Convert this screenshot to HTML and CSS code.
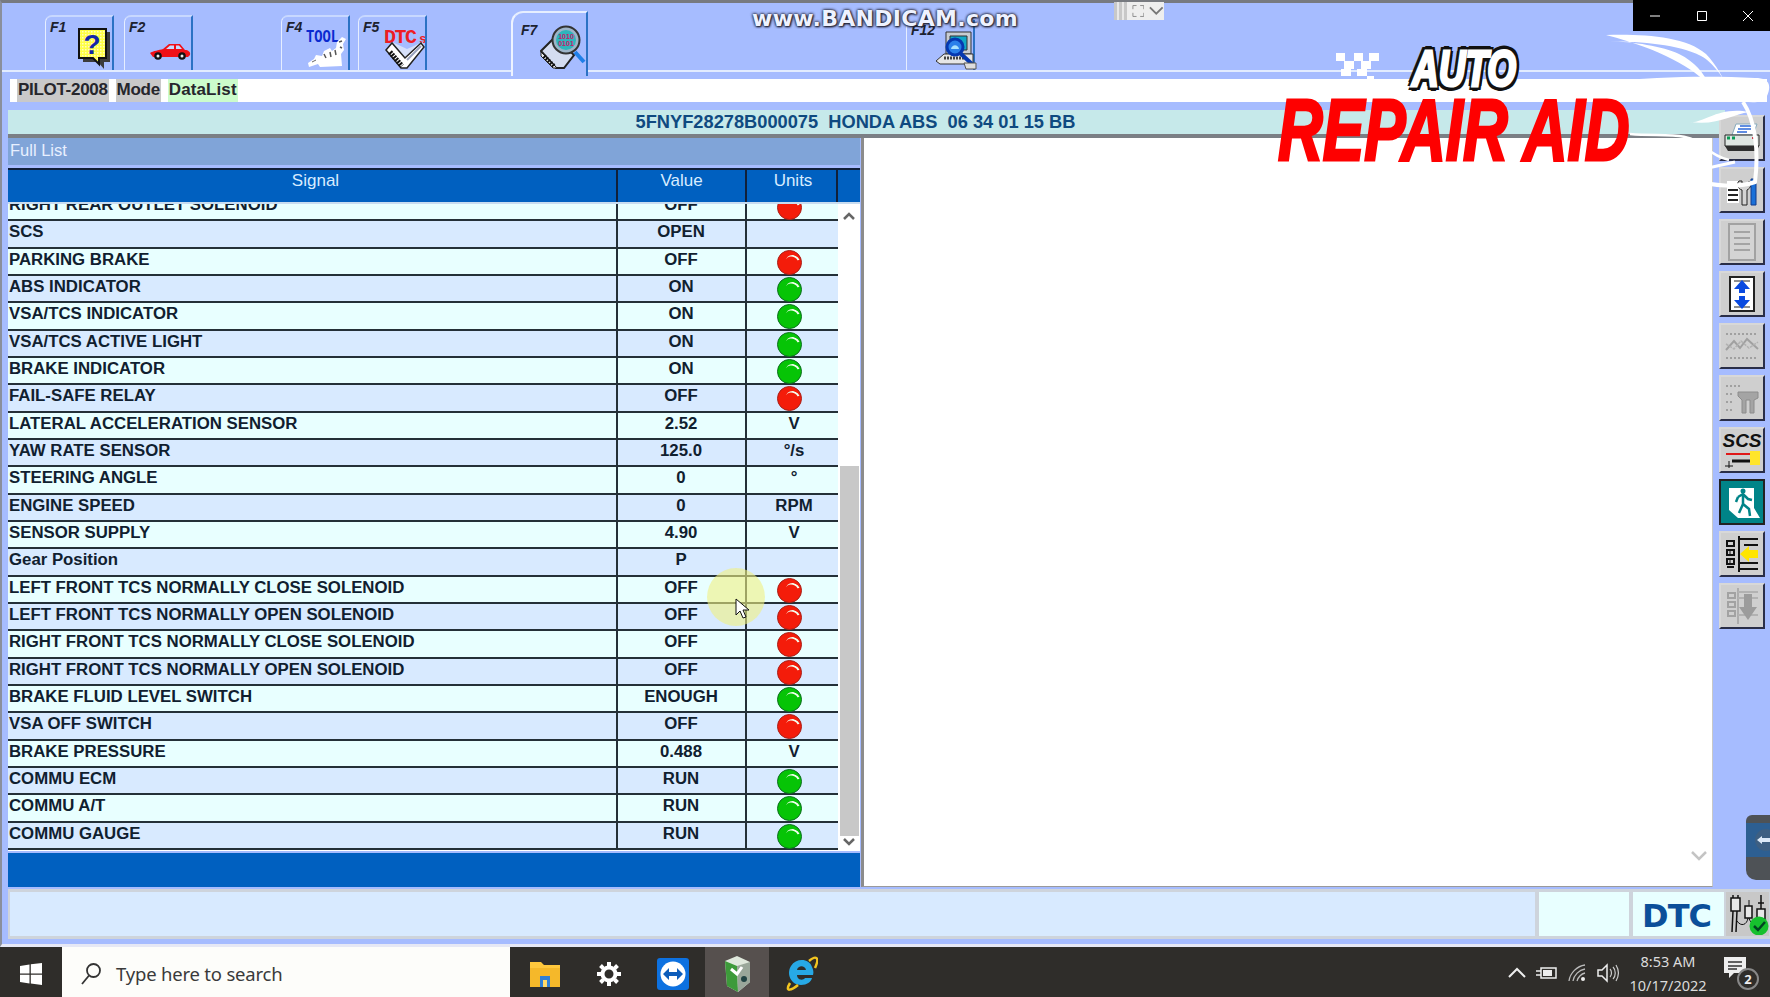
FILE: index.html
```html
<!DOCTYPE html>
<html lang="en">
<head>
<meta charset="utf-8">
<title>PILOT-2008 DataList</title>
<link rel="stylesheet" href="styles.css">
</head>
<body>
<div class="screen">
  <div class="window">
    <div class="toolbar">
      <div class="tab"><span class="fkey">F1</span>
        <svg class="tab-icon" width="36" height="42" viewBox="0 0 36 42"><defs><pattern id="dots" width="3" height="3" patternUnits="userSpaceOnUse"><rect width="3" height="3" fill="#ffff44"/><rect width="1.500" height="1.500" fill="#fffcc0"/></pattern></defs><path d="M7 4H34V34H28V41L22 34H7Z" fill="#3c3c3c"/><path d="M3 1H30V30H23V36L17 30H3Z" fill="url(#dots)" stroke="#111" stroke-width="2"/><text x="16" y="26" class="svg-q">?</text></svg>
      </div>
      <div class="tab"><span class="fkey">F2</span>
        <svg class="tab-icon car" width="41" height="16" viewBox="0 0 41 16"><path d="M0 9C3 7 9 6 13 5L19 0H30L35 6C38 6 41 8 40 11L38 13H3Z" fill="#f01018"/><path d="M16 5L20 1.500H24V5ZM26 1.500H29L32 5H26Z" fill="#c8dcff"/><circle cx="8" cy="12" r="3.800" fill="#111"/><circle cx="8" cy="12" r="1.500" fill="#eee"/><circle cx="32" cy="12" r="3.800" fill="#111"/><circle cx="32" cy="12" r="1.500" fill="#eee"/></svg>
      </div>
      <div class="tab-slot"></div>
      <div class="tab tight"><span class="fkey">F4</span>
        <svg class="tab-icon" width="42" height="42" viewBox="0 0 42 42"><text x="0" y="14" textLength="33" lengthAdjust="spacingAndGlyphs" class="svg-tool">TOOL</text><path d="M30 20L31 14L36 9L40 11L37 16L38 22L35 26L36 38L14 39L12 36L3 39L2 35L8 31L10 27L16 28L18 23L24 20L26 23Z" fill="#fff"/><path d="M18 26L20 30M24 24L25 29M29 22L30 27M33 14L36 13M34 19L36 20" stroke="#555" stroke-width="1.500"/><path d="M6 34L10 32" stroke="#666"/></svg>
      </div>
      <div class="tab"><span class="fkey">F5</span>
        <svg class="tab-icon" width="42" height="42" viewBox="0 0 42 42"><text x="1" y="15" textLength="33" lengthAdjust="spacing" class="svg-dtc">DTC</text><text x="36" y="15" class="svg-dtc small">s</text><path d="M3 21L9 14L24 21L40 14L41 20L24 40L18 40Z" fill="#d6e0fa"/><path d="M3 22L9 15L22 30L38 15L41 19L24 40H18Z" fill="#fff" stroke="#222" stroke-width="1.500"/><path d="M7 24L19 38" stroke="#111" stroke-width="5" stroke-dasharray="2 1"/><path d="M24 32L38 18" stroke="#9aa3c0" stroke-width="2"/></svg>
      </div>
      <div class="tab-slot narrow"></div>
      <div class="tab active"><span class="fkey">F7</span>
        <svg class="tab-icon" width="46" height="44" viewBox="0 0 46 44"><path d="M1 26L15 12L34 30L24 43H16Z" fill="#d4dcf0" stroke="#222" stroke-width="2"/><path d="M1 27L17 43L13 43L1 31Z" fill="#eee" stroke="#222"/><path d="M4 31L14 41" stroke="#111" stroke-width="4" stroke-dasharray="2 1"/><circle cx="26" cy="15" r="13.500" fill="#9db4c8" stroke="#333" stroke-width="2"/><circle cx="26" cy="15" r="10" fill="#2fb4bc"/><text x="26" y="13.500" class="svg-bits">1010</text><text x="26" y="21" class="svg-bits">0101</text><path d="M35 27L44 37" stroke="#1f7fe8" stroke-width="4"/></svg>
      </div>
      <div class="tab-slot wide"></div>
      <div class="tab plain"><span class="fkey">F12</span>
        <svg class="tab-icon" width="42" height="40" viewBox="0 0 42 40"><path d="M11 2H36V24H11Z" fill="#c8ccd2" stroke="#333"/><path d="M15 6H32V20H15Z" fill="#12a8c8" stroke="#333"/><path d="M1 31L9 24H38L38 34H5Z" fill="#e6e6e6" stroke="#333"/><path d="M9 28H29" stroke="#444" stroke-width="3" stroke-dasharray="2 1"/><circle cx="20" cy="17" r="8" fill="#2a80ea" stroke="#0638b0" stroke-width="3"/><path d="M16 19C17 14 23 14 24 19" fill="#a8e2ff"/><path d="M25 23L37 34" stroke="#0638b0" stroke-width="4"/><path d="M29 33H41V39H31Z" fill="#ddd" stroke="#555"/></svg>
      </div>
    </div>
    <div class="crumbs">
      <span class="crumb">PILOT-2008</span>
      <span class="crumb">Mode</span>
      <span class="crumb green">DataList</span>
    </div>
    <div class="main">
      <div class="content">
        <div class="vin-bar">5FNYF28278B000075&nbsp; HONDA ABS&nbsp; 06 34 01 15 BB</div>
        <div class="panes">
          <section class="list-pane">
            <div class="list-title">Full List</div>
            <div class="list-head">
              <span class="head-cell">Signal</span>
              <span class="head-cell">Value</span>
              <span class="head-cell">Units</span>
              <span class="head-cell"></span>
            </div>
            <div class="list-body">
              <div class="rows">
                <div class="row"><span class="c-signal">RIGHT REAR OUTLET SOLENOID</span><span class="c-value">OFF</span><span class="c-unit"><i class="light red"></i></span></div>
                <div class="row"><span class="c-signal">SCS</span><span class="c-value">OPEN</span><span class="c-unit"></span></div>
                <div class="row"><span class="c-signal">PARKING BRAKE</span><span class="c-value">OFF</span><span class="c-unit"><i class="light red"></i></span></div>
                <div class="row"><span class="c-signal">ABS INDICATOR</span><span class="c-value">ON</span><span class="c-unit"><i class="light green"></i></span></div>
                <div class="row"><span class="c-signal">VSA/TCS INDICATOR</span><span class="c-value">ON</span><span class="c-unit"><i class="light green"></i></span></div>
                <div class="row"><span class="c-signal">VSA/TCS ACTIVE LIGHT</span><span class="c-value">ON</span><span class="c-unit"><i class="light green"></i></span></div>
                <div class="row"><span class="c-signal">BRAKE INDICATOR</span><span class="c-value">ON</span><span class="c-unit"><i class="light green"></i></span></div>
                <div class="row"><span class="c-signal">FAIL-SAFE RELAY</span><span class="c-value">OFF</span><span class="c-unit"><i class="light red"></i></span></div>
                <div class="row"><span class="c-signal">LATERAL ACCELERATION SENSOR</span><span class="c-value">2.52</span><span class="c-unit">V</span></div>
                <div class="row"><span class="c-signal">YAW RATE SENSOR</span><span class="c-value">125.0</span><span class="c-unit">°/s</span></div>
                <div class="row"><span class="c-signal">STEERING ANGLE</span><span class="c-value">0</span><span class="c-unit">°</span></div>
                <div class="row"><span class="c-signal">ENGINE SPEED</span><span class="c-value">0</span><span class="c-unit">RPM</span></div>
                <div class="row"><span class="c-signal">SENSOR SUPPLY</span><span class="c-value">4.90</span><span class="c-unit">V</span></div>
                <div class="row"><span class="c-signal">Gear Position</span><span class="c-value">P</span><span class="c-unit"></span></div>
                <div class="row"><span class="c-signal">LEFT FRONT TCS NORMALLY CLOSE SOLENOID</span><span class="c-value">OFF</span><span class="c-unit"><i class="light red"></i></span></div>
                <div class="row"><span class="c-signal">LEFT FRONT TCS NORMALLY OPEN SOLENOID</span><span class="c-value">OFF</span><span class="c-unit"><i class="light red"></i></span></div>
                <div class="row"><span class="c-signal">RIGHT FRONT TCS NORMALLY CLOSE SOLENOID</span><span class="c-value">OFF</span><span class="c-unit"><i class="light red"></i></span></div>
                <div class="row"><span class="c-signal">RIGHT FRONT TCS NORMALLY OPEN SOLENOID</span><span class="c-value">OFF</span><span class="c-unit"><i class="light red"></i></span></div>
                <div class="row"><span class="c-signal">BRAKE FLUID LEVEL SWITCH</span><span class="c-value">ENOUGH</span><span class="c-unit"><i class="light green"></i></span></div>
                <div class="row"><span class="c-signal">VSA OFF SWITCH</span><span class="c-value">OFF</span><span class="c-unit"><i class="light red"></i></span></div>
                <div class="row"><span class="c-signal">BRAKE PRESSURE</span><span class="c-value">0.488</span><span class="c-unit">V</span></div>
                <div class="row"><span class="c-signal">COMMU ECM</span><span class="c-value">RUN</span><span class="c-unit"><i class="light green"></i></span></div>
                <div class="row"><span class="c-signal">COMMU A/T</span><span class="c-value">RUN</span><span class="c-unit"><i class="light green"></i></span></div>
                <div class="row"><span class="c-signal">COMMU GAUGE</span><span class="c-value">RUN</span><span class="c-unit"><i class="light green"></i></span></div>
              </div>
              <div class="scrollbar">
                <svg class="arrow" width="12" height="8" viewBox="0 0 12 8"><path d="M1 7L6 2L11 7" fill="none" stroke="#666" stroke-width="2.500"/></svg>
                <div class="track"><div class="thumb"></div></div>
                <svg class="arrow" width="12" height="8" viewBox="0 0 12 8"><path d="M1 1L6 6L11 1" fill="none" stroke="#666" stroke-width="2.500"/></svg>
              </div>
            </div>
            <div class="list-foot"></div>
          </section>
          <section class="detail-pane">
            <svg class="detail-chevron" width="16" height="10" viewBox="0 0 16 10"><path d="M1 1L8 8L15 1" fill="none" stroke="#c4c4c4" stroke-width="2.500"/></svg>
          </section>
        </div>
      </div>
      <aside class="side-tools">
        <button class="tool"><svg width="36" height="30" viewBox="0 0 36 30"><path d="M12 1H33L29 12H8Z" fill="#fff" stroke="#8ab"/><path d="M16 3H29M14 6H27M13 9H23" stroke="#2b68d8" stroke-width="1.500"/><path d="M1 12H35V23H1Z" fill="#dfe6e2" stroke="#222"/><path d="M3 15H6M8 15H11" stroke="#0a9a55" stroke-width="3"/><path d="M28 15H32" stroke="#d04050" stroke-width="2"/><path d="M1 23L4 28H33L35 23Z" fill="#2e2e2e"/></svg></button>
        <button class="tool"><svg width="30" height="34" viewBox="0 0 30 34"><path d="M0 8H12V30H0Z" fill="#fff"/><path d="M1 12H11M1 17H11M1 22H11M1 27H11" stroke="#222" stroke-width="2"/><path d="M12 8C9 11 11 16 15 17V32H20V17C24 15 25 11 22 8V12H15V8Z" fill="#d4d4d4" stroke="#222"/><path d="M24 6H29V32H24Z" fill="#1a70d8" stroke="#123a8a"/></svg></button>
        <button class="tool off"><svg width="30" height="38" viewBox="0 0 30 38"><path d="M2 1H28V37H2Z" fill="#d4d4d4" stroke="#a2a2a2" stroke-width="2"/><path d="M7 9H23M7 15H23M7 21H23M7 27H23" stroke="#a4a4a4" stroke-width="2"/></svg></button>
        <button class="tool"><svg width="26" height="36" viewBox="0 0 26 36"><path d="M1 1H25V35H1Z" fill="#fff" stroke="#222" stroke-width="2"/><path d="M5 5H21M5 31H21" stroke="#222"/><path d="M13 4L21 13H16V17H10V13H5ZM13 33L21 24H16V20H10V24H5Z" fill="#0a4ae0"/></svg></button>
        <button class="tool off"><svg width="36" height="34" viewBox="0 0 36 34"><path d="M2 5H34M2 29H34" stroke="#a0a0a0" stroke-width="2" stroke-dasharray="2 2"/><path d="M2 21L10 12L16 19L23 10L34 20" fill="none" stroke="#a0a0a0" stroke-width="2"/><path d="M2 15L10 20L17 12L25 19L34 13" fill="none" stroke="#b2b2b2" stroke-width="1.500" stroke-dasharray="3 1"/></svg></button>
        <button class="tool off"><svg width="36" height="36" viewBox="0 0 36 36"><path d="M2 6H16M2 14H10M2 22H10M2 30H10" stroke="#a0a0a0" stroke-width="2" stroke-dasharray="2 2"/><path d="M14 12H34V18L30 20V33H26V20L22 20V33H18V20L14 16Z" fill="#a4a4a4" stroke="#8c8c8c"/></svg></button>
        <button class="tool"><svg width="42" height="40" viewBox="0 0 42 40"><text x="21" y="17" class="svg-scs">SCS</text><path d="M5 24H29" stroke="#e01818" stroke-width="2"/><path d="M11 31H29" stroke="#111" stroke-width="3"/><path d="M8 31V38M4 36H12" stroke="#111"/><path d="M29 21H39V35H29Z" fill="#ffe52a"/></svg></button>
        <button class="tool exit"><svg width="36" height="36" viewBox="0 0 36 36"><path d="M5 4H30V24L36 34H14L5 26Z" fill="#fff"/><circle cx="19" cy="7" r="2.500" fill="#008488"/><path d="M14 13L19 10L24 15L28 16M19 11L19 20L15 29M19 20L25 25L26 32M14 13L12 18" fill="none" stroke="#008488" stroke-width="2.500"/></svg></button>
        <button class="tool"><svg width="36" height="36" viewBox="0 0 36 36"><path d="M3 5H10V10H3ZM3 14H10V19H3ZM3 23H10V28H3ZM3 31H10" fill="none" stroke="#111" stroke-width="2"/><path d="M6 14V19M6 24V27" stroke="#111"/><path d="M15 0V36" stroke="#111" stroke-width="2"/><path d="M15 3H34M20 9H34M27 15H34M27 21H34M15 27H34M15 33H34" stroke="#111" stroke-width="2"/><path d="M16 18L25 10V14H34V22H25V26Z" fill="#ffe500"/></svg></button>
        <button class="tool off"><svg width="34" height="36" viewBox="0 0 34 36"><path d="M3 5H10V10H3ZM3 14H10V19H3ZM3 23H10V28H3Z" fill="none" stroke="#a2a2a2" stroke-width="2"/><path d="M13 0V36" stroke="#a2a2a2" stroke-width="1.500"/><path d="M13 4H33M13 10H33M13 27H33" stroke="#b2b2b2" stroke-width="2"/><path d="M19 6H27V19H32L23 32L14 19H19Z" fill="#9c9c9c"/></svg></button>
      </aside>
    </div>
    <div class="status">
      <div class="st-cell grow"></div>
      <div class="st-cell mid"></div>
      <div class="st-cell code">DTC</div>
      <div class="st-link">
        <svg width="42" height="42" viewBox="0 0 42 42"><path d="M4 5H13V18H4ZM6 2V5M11 2V5" fill="#e8e8e8" stroke="#111" stroke-width="1.500"/><path d="M6 18L5 39M10 18L9 39" stroke="#111" stroke-width="1.500"/><path d="M10 28C14 34 20 32 21 25" fill="none" stroke="#111"/><path d="M18 13H25V25H18Z" fill="#e8e8e8" stroke="#111" stroke-width="1.500"/><path d="M22 25C24 32 28 32 32 28M22 7V13" fill="none" stroke="#111"/><path d="M30 16H38V26H30Z" fill="#e8e8e8" stroke="#111" stroke-width="1.500"/><path d="M34 2V16M31 10H37" stroke="#111" stroke-width="1.500"/><circle cx="32" cy="33" r="9.500" fill="#16c02e"/><path d="M27 33L31 37L38 29" fill="none" stroke="#042" stroke-width="2.500"/></svg>
      </div>
    </div>
  </div>
  <footer class="taskbar">
    <div class="start"><svg width="22" height="22" viewBox="0 0 22 22"><path d="M0 3L9.500 1.500V10.500H0ZM10.800 1.300L22 0V10.500H10.800ZM0 11.800H9.500V20.500L0 19ZM10.800 11.800H22V22L10.800 20.600Z" fill="#fff"/></svg></div>
    <div class="search">
      <svg width="22" height="24" viewBox="0 0 22 24"><circle cx="13.500" cy="8.500" r="6.500" fill="none" stroke="#333" stroke-width="1.800"/><path d="M9 13.500L2 22" stroke="#333" stroke-width="1.800"/></svg>
      <span>Type here to search</span>
    </div>
    <div class="apps">
      <div class="app"><svg width="32" height="28" viewBox="0 0 32 28"><path d="M1 2H12L15 5H31V27H1Z" fill="#ffc83d"/><path d="M1 8H31V27H1Z" fill="#f5b82a"/><path d="M11 16H21V27H11Z" fill="#2f7fd6"/><path d="M14 20H18V27H14Z" fill="#ffd968"/></svg></div>
      <div class="app"><svg width="26" height="26" viewBox="0 0 26 26"><circle cx="13" cy="13" r="6.500" fill="none" stroke="#fff" stroke-width="4"/><path d="M13 1V5M13 21V25M1 13H5M21 13H25M4.500 4.500L7.300 7.300M18.700 18.700L21.500 21.500M21.500 4.500L18.700 7.300M7.300 18.700L4.500 21.500" stroke="#fff" stroke-width="4"/></svg></div>
      <div class="app"><svg width="32" height="32" viewBox="0 0 32 32"><rect width="32" height="32" rx="3" fill="#0d71e0"/><circle cx="16" cy="16" r="12.500" fill="#fff"/><path d="M6 16L12 10V14H20V10L26 16L20 22V18H12V22Z" fill="#0d5dbb"/></svg></div>
      <div class="app current"><svg width="32" height="38" viewBox="0 0 32 38"><path d="M4 6L16 1L29 7V27L17 37L6 31Z" fill="#dfe8dc"/><path d="M4 6L16 11L17 37L6 31Z" fill="#3d9a3a"/><path d="M16 11L29 7V27L17 37Z" fill="#9aa79a"/><path d="M10 14L16 19L21 12" fill="none" stroke="#fff" stroke-width="3"/><circle cx="23" cy="24" r="3" fill="#244"/></svg></div>
      <div class="app"><svg width="34" height="36" viewBox="0 0 34 36"><path d="M28 11C25 2 12 2 7 10C2 18 7 29 17 29C23 29 27 26 28 22H21C19 25 13 24 13 19H29C30 16 29 13 28 11ZM13 14C14 9 21 9 22 14Z" fill="#27a9e6"/><path d="M6 27C0 37 8 34 14 29M25 5C32 -1 36 1 31 12" fill="none" stroke="#f3c520" stroke-width="2.500"/></svg></div>
    </div>
    <div class="tray">
      <svg width="18" height="12" viewBox="0 0 18 12"><path d="M1 10L9 2L17 10" fill="none" stroke="#eee" stroke-width="2"/></svg>
      <svg width="22" height="14" viewBox="0 0 22 14"><path d="M6 2H21V12H6ZM1 5H6M1 9H6" fill="none" stroke="#eee" stroke-width="1.500"/><path d="M8 4H17V10H8Z" fill="#eee"/></svg>
      <svg class="wifi" width="20" height="18" viewBox="0 0 20 18"><path d="M1 17C2 9 9 2 17 1M5 17C6 11 11 6 17 5M9 17C10 14 13 10 17 9" fill="none" stroke="#bbb" stroke-width="1.300"/><circle cx="15" cy="15" r="2" fill="#eee"/></svg>
      <svg width="22" height="20" viewBox="0 0 22 20"><path d="M1 7H5L10 2V18L5 13H1Z" fill="none" stroke="#eee" stroke-width="1.500"/><path d="M13 6C15 8 15 12 13 14M16 4C19 7 19 13 16 16M19 2C22 7 22 13 19 18" fill="none" stroke="#ccc" stroke-width="1.200"/></svg>
      <div class="clock"><span>8:53 AM</span><span>10/17/2022</span></div>
      <div class="notify">
        <svg width="24" height="24" viewBox="0 0 24 24"><path d="M1 1H23V17H11L6 22V17H1Z" fill="#eee"/><path d="M5 6H19M5 10H19M5 13H14" stroke="#333" stroke-width="1.300"/></svg>
        <span class="badge">2</span>
      </div>
    </div>
  </footer>

  <div class="bandicam">www.BANDICAM.com</div>
  <div class="rec-widget">
    <i class="rec-grid"></i>
    <svg width="14" height="14" viewBox="0 0 14 14"><path d="M1 5V1H5M9 1H13V5M13 9V13H9M5 13H1V9" fill="none" stroke="#888"/></svg>
    <svg width="16" height="10" viewBox="0 0 16 10"><path d="M1 1L8 8L15 1" fill="none" stroke="#777" stroke-width="2"/></svg>
  </div>
  <div class="win-controls">
    <svg width="12" height="12" viewBox="0 0 12 12"><path d="M1 6H11" stroke="#fff"/></svg>
    <svg width="12" height="12" viewBox="0 0 12 12"><path d="M1.500 1.500H10.500V10.500H1.500Z" fill="none" stroke="#fff"/></svg>
    <svg width="12" height="12" viewBox="0 0 12 12"><path d="M1 1L11 11M11 1L1 11" stroke="#fff"/></svg>
  </div>
  <div class="cursor-glow"></div>
  <svg class="cursor" width="16" height="22" viewBox="0 0 16 22"><path d="M1 1V17L5 13L8 20L11 19L8 12H14Z" fill="#fff" stroke="#111"/></svg>
  <div class="remote-tab"><svg width="24" height="34" viewBox="0 0 24 34"><rect width="24" height="34" fill="#2d5f92"/><circle cx="20" cy="17" r="11" fill="#3d5f82"/><path d="M11 17L16 13V15H24V19H16V21Z" fill="#ddeaf8"/></svg></div>
  <svg class="swoosh" width="200" height="170" viewBox="0 0 200 170">
    <path d="M3 5C40 4 82 6 103 24C113 34 120 48 125 58C122 50 110 32 98 26C75 14 40 12 6 11C30 12 60 16 76 24C92 32 100 42 107 56C90 38 60 20 3 5Z" fill="#fff"/>
    <path d="M0 52C60 46 110 46 152 48C163 48 170 52 164 66C160 74 150 72 140 72L0 72Z" fill="#fff"/>
    <path d="M140 72C152 90 156 120 152 152C135 158 110 156 90 150" fill="none" stroke="#fff" stroke-width="4"/>
    <path d="M87 92C100 94 115 76 146 82C130 84 115 96 87 92Z" fill="#fff"/>
    <path d="M27 104C60 107 85 100 103 118C110 124 118 128 126 130" fill="none" stroke="#fff" stroke-width="2.500"/>
    <path d="M96 140L132 132" stroke="#fff" stroke-width="3"/>
  </svg>
  <svg class="checker" width="44" height="30" viewBox="0 0 44 30"><path d="M0 1H9V9H0ZM18 1H27V9H18ZM33 1H43V9H33ZM8 9H18V17H8ZM25 9H35V17H25ZM5 17H15V24H5ZM21 17H31V24H21ZM31 24H38V30H31Z" fill="#fff"/></svg>
  <div class="brand">
    <span class="brand-auto">AUTO</span>
    <span class="brand-repair">REPAIR AID</span>
  </div>
</div>
</body>
</html>
```
FILE: styles.css
```css
* { box-sizing: border-box; }
html, body { margin: 0; padding: 0; }
body { font-family: "Liberation Sans", Arial, sans-serif; background: #2f2d2a; overflow: hidden; }
.screen { position: relative; width: 1770px; height: 997px; display: flex; flex-direction: column; overflow: hidden; }

.window { height: 948px; background: #a6bcff; border-top: 3px solid #777a80; border-left: 2px solid #8a8f9c; display: flex; flex-direction: column; border-bottom: 3px solid #e6e8f5; }

/* function tabs */
.toolbar { height: 69px; flex: none; display: flex; align-items: flex-end; padding-left: 43px; border-bottom: 2px solid #e2ecff; }
.tab { position: relative; width: 69px; height: 55px; margin-right: 10px; display: flex; justify-content: space-between; align-items: flex-start; border-left: 1px solid #e6eeff; border-top: 2px solid #c8d8ff; border-right: 2px solid #2b72c4; border-top-left-radius: 7px; padding: 2px 0 0 4px; flex: none; }
.tab.tight { margin-right: 8px; }
.tab.active { width: 77px; height: 65px; margin-bottom: -6px; margin-right: 9px; background: #a6bcff; border-left: 2px solid #eef3ff; border-top: 2px solid #e6eeff; border-top-left-radius: 12px; z-index: 1; padding: 9px 0 0 8px; }
.tab.plain { border-top: 0; height: 50px; }
.tab-slot { width: 78px; flex: none; }
.tab-slot.narrow { width: 74px; }
.tab-slot.wide { width: 309px; }
.fkey { font-size: 14px; font-weight: bold; font-style: italic; color: #1c2230; }
.tab-icon { align-self: flex-end; flex: none; }
.tab.active .tab-icon { margin-bottom: 7px; }
.tab-icon.car { margin-bottom: 10px; }
.svg-q { font: bold 28px "Liberation Sans", sans-serif; fill: #1226a8; text-anchor: middle; }
.svg-tool { font: bold 19px "Liberation Mono", monospace; fill: #0a2ad0; }
.svg-dtc { font: bold 20px "Liberation Mono", monospace; fill: #ee1c24; }
.svg-dtc.small { font-size: 13px; }
.svg-bits { font: bold 7px "Liberation Sans", sans-serif; fill: #c8186a; text-anchor: middle; }
.svg-scs { font: italic bold 19px "Liberation Sans", sans-serif; fill: #111; text-anchor: middle; }

/* breadcrumb */
.crumbs { height: 23px; flex: none; margin: 7px 3px 8px 8px; background: #fff; display: flex; gap: 7px; padding-left: 7px; align-items: stretch; }
.crumb { background: #c9c9c9; padding: 0 1px; font-size: 17px; font-weight: bold; line-height: 22px; color: #26262c; letter-spacing: -0.3px; }
.crumb.green { background: #ccfccc; letter-spacing: 0.1px; }

/* main */
.main { flex: 1; min-height: 0; display: flex; }
.content { width: 1717px; margin-left: 6px; flex: none; display: flex; flex-direction: column; }
.vin-bar { height: 24px; flex: none; background: #c6e9ea; text-align: center; font-size: 18.250px; font-weight: bold; color: #0f4a80; line-height: 24px; padding-right: 22px; }
.panes { flex: 1; min-height: 0; display: flex; gap: 1px; border-top: 4px solid #7b7f85; padding-right: 12px; }

.list-pane { width: 852px; flex: none; display: flex; flex-direction: column; height: 749px; }
.list-title { height: 27px; flex: none; background: #80a4d8; color: #e8f0ff; font-size: 16.500px; line-height: 24px; padding-left: 2px; }
.list-head { height: 36px; flex: none; margin-top: 3px; display: grid; grid-template-columns: 610px 129px 91px 22px; border-top: 2px solid #10203a; border-bottom: 2px solid #c8dcf0; background: #0060c0; }
.head-cell { color: #d8ecff; font-size: 17px; text-align: center; line-height: 21px; border-right: 2px solid #10203a; }
.head-cell:first-child { padding-left: 7px; }
.head-cell:nth-child(3) { padding-left: 3px; }
.head-cell:last-child { border-right: 0; }
.list-body { flex: 1; min-height: 0; display: flex; background: #fff; overflow: hidden; }
.rows { width: 830px; flex: none; margin-top: -10px; }
.row { height: 27.33px; display: grid; grid-template-columns: 610px 129px 91px; border-bottom: 2px solid #243038; background: #d8eaff; color: #10202f; font-size: 16.800px; font-weight: bold; line-height: 22px; }
.row:nth-child(odd) { background: #e8ffff; }
.c-signal { border-right: 2px solid #243038; white-space: nowrap; overflow: hidden; padding-left: 1px; }
.c-value { border-right: 2px solid #243038; text-align: center; padding-right: 1px; }
.c-unit { text-align: center; display: flex; justify-content: center; padding-left: 3px; }
.light { position: relative; width: 25px; height: 25px; margin: 1px 9px 0 0; border-radius: 50%; flex: none; }
.light::after { content: ""; position: absolute; top: 4px; left: 7px; width: 13px; height: 13px; border-radius: 50%; border-top: 2px solid #f4fff0; border-right: 2px solid transparent; border-left: 0 solid transparent; transform: rotate(24deg); }
.light.red { background: #f41c0a; border: 1px solid #a82018; }
.light.green { background: #06c406; border: 1px solid #0c6e20; }

.scrollbar { width: 22px; flex: none; display: flex; flex-direction: column; align-items: center; padding: 8px 0 5px; }
.arrow { flex: none; }
.track { flex: 1; width: 19px; margin: 2px 0; display: flex; flex-direction: column; justify-content: flex-end; }
.thumb { height: 370px; background: #c8c8c8; }
.list-foot { height: 34px; flex: none; margin-top: 2px; background: #0060c0; }

.detail-pane { flex: 1; height: 749px; background: #fff; border-left: 3px solid #8c8c8c; border-bottom: 1px solid #9a9a9a; border-right: 1px solid #c8c8c8; display: flex; align-items: flex-end; justify-content: flex-end; padding: 0 5px 25px 0; }
.detail-chevron { flex: none; }

.side-tools { width: 46px; flex: none; margin: 5px 0 0 -6px; display: flex; flex-direction: column; gap: 6px; }
.tool { width: 46px; height: 46px; padding: 0; background: #cfcfcf; border: 2px solid #2a2e48; border-top-color: #d8d8d8; border-left-color: #d8d8d8; display: flex; align-items: center; justify-content: center; }
.tool.exit { background: #008488; border-color: #222; }

/* status strip */
.status { height: 50px; flex: none; display: flex; gap: 4px; margin: 0 0 5px 6px; padding: 3px 1px 3px 2px; background: #ced4dc; }
.st-cell { height: 44px; background: #d8eaff; }
.st-cell.grow { flex: 1; }
.st-cell.mid { width: 90px; background: #e8ffff; }
.st-cell.code { width: 91px; background: #e8ffff; color: #0b4f9a; font-size: 32px; font-weight: bold; line-height: 48px; text-align: center; font-family: "DejaVu Sans", sans-serif; letter-spacing: -1px; padding-right: 4px; }
.st-link { width: 43px; height: 44px; margin-left: -2px; background: #c8c8c8; display: flex; align-items: center; justify-content: center; }

/* taskbar */
.taskbar { flex: 1; display: flex; align-items: stretch; background: #2f2d2a; color: #e8e8e8; }
.start { width: 62px; flex: none; display: flex; align-items: center; justify-content: center; padding-top: 3px; }
.search { width: 448px; flex: none; background: #fdfdfa; display: flex; align-items: center; gap: 14px; padding: 3px 0 0 18px; font: 18.500px "Noto Sans", sans-serif; color: #3a3a3a; }
.search span { letter-spacing: -0.2px; }
.apps { display: flex; margin-left: 3px; }
.app { width: 64px; display: flex; align-items: center; justify-content: center; padding-top: 3px; }
.app.current { background: #56504e; }
.tray { margin-left: auto; display: flex; align-items: center; gap: 9px; padding: 2px 13px 0 0; }
.wifi { margin-left: 2px; }
.clock { display: flex; flex-direction: column; align-items: center; font: 14.500px/24px "Noto Sans", sans-serif; width: 80px; color: #dcdcdc; }
.notify { position: relative; width: 40px; height: 34px; padding-left: 6px; }
.badge { position: absolute; left: 20px; top: 12px; width: 22px; height: 22px; border: 2px solid #888; border-radius: 50%; background: #2f2d2a; font: bold 13px/18px "Noto Sans", sans-serif; text-align: center; color: #eee; }

/* things lying over the recording */
.bandicam { position: absolute; left: 750px; top: 6px; width: 270px; text-align: center; font-size: 22px; font-weight: bold; color: #eef2ff; white-space: nowrap; text-shadow: 0 0 3px #223, 0 0 3px #223, 1px 1px 2px #223; font-family: "DejaVu Sans", sans-serif; letter-spacing: 0.3px; line-height: 26px; }
.rec-widget { position: absolute; left: 1114px; top: 2px; width: 50px; height: 18px; background: #eeeeee; display: flex; align-items: center; gap: 5px; }
.rec-grid { width: 14px; height: 18px; background: repeating-linear-gradient(90deg, #c8c8c8 0 3px, #e8e8e8 3px 5px); }
.win-controls { position: absolute; right: 0; top: 0; width: 137px; height: 31px; background: #000; display: flex; align-items: center; justify-content: space-between; padding: 0 16px; }
.cursor-glow { position: absolute; left: 707px; top: 568px; width: 58px; height: 58px; border-radius: 50%; background: rgba(240, 240, 130, 0.6); }
.cursor { position: absolute; left: 735px; top: 598px; }
.remote-tab { position: absolute; left: 1746px; top: 815px; width: 24px; height: 65px; background: #4e5256; border-radius: 6px 0 0 10px; padding-top: 8px; }
.swoosh { position: absolute; left: 1603px; top: 30px; }
.checker { position: absolute; left: 1336px; top: 52px; }
.brand { position: absolute; left: 1270px; top: 40px; width: 370px; height: 122px; }
.brand-auto { position: absolute; left: 142px; top: 3px; font-size: 50px; line-height: 52px; font-weight: bold; font-style: italic; color: #fff; -webkit-text-stroke: 3px #fff; text-shadow: 5px 0 #111, -5px 0 #111, 0 5px #111, 0 -5px #111, 4px 4px #111, -4px 4px #111, 4px -4px #111, -4px -4px #111; transform: scaleX(0.74); transform-origin: left top; }
.brand-repair { position: absolute; left: 8px; top: 46px; font-size: 88px; line-height: 88px; font-weight: bold; font-style: italic; color: #fe0000; white-space: nowrap; transform: scaleX(0.705); transform-origin: left top; -webkit-text-stroke: 3px #fe0000; }
```
